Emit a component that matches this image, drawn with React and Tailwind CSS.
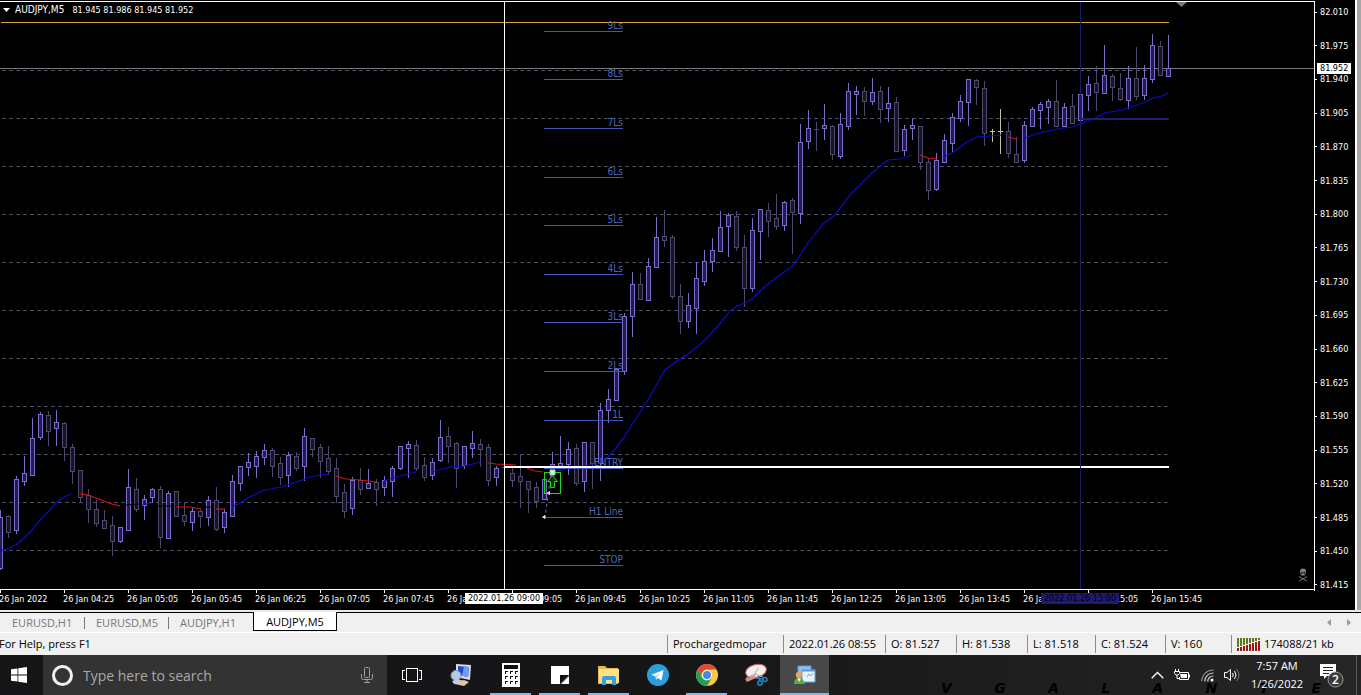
const BAR_STEP = 8;

// [high, body top, body bottom, low, direction] in chart pixels: 1 = up, 0 = down, 2 = highlighted doji
const CANDLES = [
  [510, 517, 568, 570, 1], [515, 516, 532, 538, 0], [476, 479, 530, 534, 1], [456, 473, 481, 486, 1],
  [418, 438, 475, 475, 1], [412, 414, 437, 440, 1], [411, 415, 431, 446, 0], [410, 422, 428, 446, 1],
  [422, 423, 447, 461, 0], [444, 447, 471, 484, 0], [470, 470, 497, 503, 0], [489, 495, 509, 523, 0],
  [500, 509, 523, 527, 0], [510, 520, 528, 528, 0], [516, 525, 541, 556, 0], [527, 527, 541, 543, 1],
  [469, 487, 530, 530, 1], [478, 489, 509, 512, 0], [495, 499, 505, 520, 1], [488, 489, 497, 503, 1],
  [486, 489, 537, 548, 0], [491, 493, 538, 538, 1], [491, 491, 516, 516, 0], [502, 515, 521, 526, 0],
  [508, 511, 522, 531, 1], [509, 511, 516, 528, 0], [496, 500, 517, 526, 1], [487, 500, 529, 531, 0],
  [509, 512, 527, 533, 1], [475, 481, 516, 516, 1], [466, 466, 483, 491, 1], [453, 462, 467, 476, 1],
  [451, 456, 466, 478, 1], [444, 450, 457, 465, 1], [448, 450, 466, 477, 0], [457, 463, 477, 485, 0],
  [452, 455, 475, 487, 1], [452, 456, 468, 471, 0], [428, 436, 466, 481, 1], [438, 438, 449, 457, 0],
  [444, 447, 461, 478, 0], [446, 458, 471, 475, 0], [458, 468, 496, 503, 0], [484, 492, 511, 518, 0],
  [477, 480, 508, 515, 1], [468, 480, 489, 495, 0], [469, 483, 488, 489, 1], [479, 482, 489, 506, 0],
  [476, 480, 487, 496, 1], [466, 468, 481, 497, 1], [446, 446, 468, 470, 1], [441, 444, 448, 478, 1],
  [440, 445, 468, 471, 0], [457, 465, 477, 481, 0], [458, 462, 475, 480, 1], [420, 437, 460, 462, 1],
  [427, 436, 446, 463, 0], [442, 443, 468, 488, 0], [446, 446, 465, 469, 1], [431, 443, 448, 458, 1],
  [439, 444, 449, 467, 0], [444, 447, 480, 486, 0], [466, 468, 477, 486, 1], [467, 467, 468, 468, 0],
  [468, 473, 480, 487, 0], [454, 476, 481, 508, 0], [481, 481, 489, 513, 0], [482, 487, 501, 508, 0],
  [479, 479, 499, 499, 1], [452, 464, 471, 475, 1], [436, 463, 466, 468, 1], [442, 449, 464, 475, 1],
  [444, 448, 483, 486, 0], [442, 442, 481, 492, 1], [442, 442, 463, 489, 0], [403, 410, 463, 481, 1],
  [389, 399, 410, 423, 1], [369, 369, 400, 400, 1], [313, 316, 371, 375, 1], [272, 284, 316, 337, 1],
  [273, 284, 299, 300, 0], [258, 266, 300, 301, 1], [217, 237, 267, 267, 1], [210, 236, 240, 247, 0],
  [235, 237, 296, 299, 0], [284, 296, 321, 334, 0], [293, 305, 321, 328, 1], [262, 278, 308, 334, 1],
  [250, 261, 281, 286, 1], [238, 250, 261, 272, 1], [211, 227, 251, 251, 1], [213, 215, 226, 257, 1],
  [211, 216, 247, 251, 0], [235, 247, 288, 307, 0], [218, 230, 288, 292, 1], [209, 209, 231, 260, 1],
  [203, 210, 221, 237, 0], [194, 218, 226, 230, 0], [201, 202, 225, 231, 1], [198, 200, 212, 254, 0],
  [124, 142, 213, 224, 1], [110, 128, 141, 149, 1], [122, 129, 129, 151, 0], [104, 125, 128, 140, 1],
  [125, 126, 154, 160, 0], [113, 124, 156, 159, 1], [83, 91, 126, 130, 1], [86, 91, 94, 115, 1],
  [87, 91, 101, 116, 0], [78, 92, 101, 105, 1], [86, 91, 109, 123, 0], [87, 103, 108, 122, 1],
  [97, 102, 151, 152, 0], [125, 129, 150, 156, 1], [118, 125, 128, 140, 1], [126, 126, 162, 170, 0],
  [158, 162, 190, 200, 0], [153, 160, 189, 191, 1], [134, 140, 162, 162, 1], [113, 117, 143, 153, 1],
  [95, 101, 118, 122, 1], [79, 79, 102, 126, 1], [79, 80, 87, 105, 0], [81, 88, 133, 146, 0],
  [129, 131, 131, 142, 2], [109, 131, 131, 154, 2], [122, 131, 153, 158, 0], [137, 154, 162, 162, 0],
  [121, 125, 160, 163, 1], [107, 109, 126, 126, 1], [102, 104, 110, 129, 1], [99, 101, 107, 124, 1],
  [80, 101, 126, 126, 0], [103, 107, 126, 127, 1], [94, 106, 123, 124, 0], [94, 94, 120, 120, 1],
  [76, 84, 95, 111, 1], [66, 83, 92, 111, 0], [45, 75, 93, 93, 1], [74, 76, 87, 101, 0],
  [73, 88, 99, 101, 0], [66, 78, 100, 109, 1], [47, 78, 96, 100, 0], [65, 78, 95, 100, 1],
  [34, 45, 79, 83, 1], [41, 46, 75, 75, 0], [35, 68, 76, 76, 1],
];

const CANDLE_COLORS = [
  { stroke: "#4f486e", fill: "#17151f" },
  { stroke: "#7d6cc9", fill: "#231a4e" },
  { stroke: "#c3c39a", fill: "#c3c39a" },
];

const MOVING_AVERAGE = [
  { color: "#0c0ccc", points: "0,551 8,549 16,545 24,538 32,530 40,520 48,512 56,503 64,497 71,494" },
  { color: "#d8101c", points: "80,494 88,495 96,498 104,501 112,504 120,506" },
  { color: "#000000", points: "125,505 139,504" },
  { color: "#0c0ccc", points: "142,505 147,504 152,503" },
  { color: "#000000", points: "158,506 174,506" },
  { color: "#d8101c", points: "176,507 190,507 201,509" },
  { color: "#000000", points: "204,507 214,507" },
  { color: "#d8101c", points: "216,509 225,509" },
  { color: "#0c0ccc", points: "232,507 240,503 248,498 262,491 275,488 282,487 290,484 299,481 310,477 320,475 329,474" },
  { color: "#d8101c", points: "336,476 346,479 360,480 376,482" },
  { color: "#0c0ccc", points: "384,481 396,477 408,474 416,472" },
  { color: "#0c0ccc", points: "432,472 450,467 464,466 482,462" },
  { color: "#d8101c", points: "488,463 496,464 516,465" },
  { color: "#d8101c", points: "527,468 535,471 543,472" },
  {
    color: "#0c0ccc",
    points:
      "554,472 568,468 584,466 600,463 608,457 616,448 624,437 633,423 645,405 665,370 677,361 688,354 703,342 717,327 730,311 737,306 745,303 752,299 763,288 777,277 793,266 802,252 808,243 823,224 835,215 850,195 873,172 888,160 900,159 912,155",
  },
  { color: "#d8101c", points: "920,155 928,158 937,159" },
  { color: "#0c0ccc", points: "943,157 952,153 967,142 977,137 990,136 1001,135" },
  { color: "#d8101c", points: "1008,137 1016,139" },
  {
    color: "#0c0ccc",
    points: "1023,139 1033,135 1043,132 1063,128 1073,127 1083,123 1095,118 1105,113 1122,110 1130,107 1138,105 1153,98 1162,96 1168,93",
  },
];

const GRID_LINES = [70, 118, 166, 214, 262, 310, 358, 406, 454, 502, 550];

const LEVELS = [
  ["9Ls", 31], ["8Ls", 79], ["7Ls", 128], ["6Ls", 177], ["5Ls", 225], ["4Ls", 274],
  ["3Ls", 322], ["2Ls", 371], ["1L", 420], ["ENTRY", 468], ["H1 Line", 517], ["STOP", 565],
];

const PRICES = [
  "82.010", "81.975", "81.940", "81.905", "81.870", "81.835", "81.800", "81.765", "81.730",
  "81.695", "81.660", "81.625", "81.590", "81.555", "81.520", "81.485", "81.450", "81.415",
];

const TIMES = [
  "26 Jan 2022", "26 Jan 04:25", "26 Jan 05:05", "26 Jan 05:45", "26 Jan 06:25", "26 Jan 07:05", "26 Jan 07:45",
  "26 Jan 08:25", "26 Jan 09:05", "26 Jan 09:45", "26 Jan 10:25", "26 Jan 11:05", "26 Jan 11:45", "26 Jan 12:25",
  "26 Jan 13:05", "26 Jan 13:45", "26 Jan 14:25", "26 Jan 15:05", "26 Jan 15:45",
];

const TABS = ["EURUSD,H1", "EURUSD,M5", "AUDJPY,H1"];

const Candle = ({ index, data }) => {
  const [high, top, bottom, low, kind] = data;
  const x = index * BAR_STEP + 0.5;
  const { stroke, fill } = CANDLE_COLORS[kind];
  return (
    <g stroke={stroke} fill={fill}>
      <line x1={x} x2={x} y1={high} y2={low} />
      {bottom - top > 1 ? (
        <rect x={x - 2} y={top + 0.5} width="4" height={bottom - top} />
      ) : (
        <line x1={x - 2.5} x2={x + 2.5} y1={top + 0.5} y2={top + 0.5} />
      )}
    </g>
  );
};

const PriceChart = () => (
  <svg width="1314" height="587" viewBox="0 2 1314 587" className="block shrink-0" role="img" aria-label="AUDJPY M5 chart">
    <g shapeRendering="crispEdges">
      {GRID_LINES.map((y) => (
        <line key={y} x1="2" x2="1169" y1={y + 0.5} y2={y + 0.5} stroke="#505064" strokeDasharray="4 3" />
      ))}
      <line x1="1" x2="1169" y1="22.5" y2="22.5" stroke="#d8a440" />
      <line x1="0" x2="1314" y1="68.5" y2="68.5" stroke="#77777c" />
      {CANDLES.map((data, i) => (
        <Candle key={i} index={i} data={data} />
      ))}
    </g>

    <g fill="none" strokeWidth="1.2">
      {MOVING_AVERAGE.map(({ color, points }) => (
        <polyline key={points} points={points} stroke={color} />
      ))}
    </g>

    <g className="font-['DejaVu_Sans_Condensed',sans-serif] text-[10px]" fill="#4d68bc" textAnchor="end">
      {LEVELS.map(([label, y]) => (
        <g key={label}>
          <line x1="544" x2="623" y1={y + 0.5} y2={y + 0.5} stroke="#4056b8" shapeRendering="crispEdges" />
          <text x="623" y={y - 2}>{label}</text>
        </g>
      ))}
    </g>

    <g shapeRendering="crispEdges">
      <rect x="504" y="466" width="665" height="2" fill="#fff" />
      <line x1="504.5" x2="504.5" y1="1" y2="589" stroke="#fff" />
      <line x1="1080.5" x2="1080.5" y1="2" y2="589" stroke="#1b1b62" />
      <rect x="1081" y="118" width="88" height="2" fill="#1f1f72" />
    </g>

    {/* buy order marker */}
    <line x1="551" y1="474" x2="545" y2="517" stroke="#6f6f9a" strokeDasharray="3 3" />
    <rect x="544.5" y="472.5" width="16" height="21" fill="none" stroke="#22d322" />
    <path d="M552.5 475.5l5 6h-3v6h-4v-6h-3z" fill="#0c2a10" stroke="#22d322" />
    <path d="M550 470h5v5h-5z" fill="#d8ffd8" stroke="#8cc88c" />
    <path d="M547.500 493l2-1.500v3zM542.500 517l2.500-1.500v3z" fill="#fff" stroke="#dcdcdc" />

    <path d="M1176 2h11l-5.500 5z" fill="#77777c" />
    {/* expert advisor skull */}
    <path d="M1300 571q0-2.500 3-2.500t3 2.500v2l-1 1v1.500h-4v-1.500l-1-1z" fill="#7d7d7d" />
    <path d="M1301 572h1.500v1.500h-1.500zM1303.500 572h1.500v1.500h-1.500z" fill="#000" />
    <path d="M1299 576.500l8 4.500M1307 576.500l-8 4.500" stroke="#7d7d7d" />
  </svg>
);

const PriceAxis = () => (
  <aside className="relative flex w-[41px] shrink-0 flex-col justify-between border-l border-white pt-[5px] -mb-px">
    {PRICES.map((price) => (
      <div key={price} className="flex h-3 items-center gap-[3px] leading-3">
        <i className="h-px w-[2px] bg-white" />
        <span>{price}</span>
      </div>
    ))}
    <span className="absolute left-[2px] top-[62px] h-[11px] bg-white px-[3px] leading-[11px] text-black">81.952</span>
  </aside>
);

const TimeAxis = () => (
  <div className="relative h-5 overflow-hidden">
    <div className="flex">
      {TIMES.map((time) => (
        <div key={time} className="w-16 shrink-0">
          <i className="block h-[3px] w-px bg-white" />
          <span className="-ml-px block whitespace-nowrap leading-3">{time}</span>
        </div>
      ))}
    </div>
    <span className="absolute left-[465px] top-[3px] h-[11px] w-[78px] bg-white text-center leading-[11px] text-black">2022.01.26 09:00</span>
    <span className="absolute left-[1041px] top-[3px] h-[11px] w-[78px] bg-[#1f1a75] text-center leading-[11px] text-black">2022.01.26 15:00</span>
  </div>
);

const ChartWindow = () => (
  <section className="flex bg-black text-[9px] text-white font-['DejaVu_Sans_Condensed',sans-serif]">
    <div className="min-w-0 flex-1">
      <div className="mt-px flex">
        <div className="relative min-w-0 flex-1 overflow-hidden border-y border-white">
          <PriceChart />
          <div className="absolute left-[3px] top-[2px] flex items-center gap-1 leading-3">
            <svg width="8" height="4"><path d="M0 0h7l-3.500 4z" fill="#fff" /></svg>
            <h1 className="text-[10px]">AUDJPY,M5</h1>
            <span className="pl-1">81.945 81.986 81.945 81.952</span>
          </div>
        </div>
        <PriceAxis />
      </div>
      <TimeAxis />
    </div>
    <div className="w-[2px] bg-white" />
    <div className="w-1 bg-[#a8a8a8]" />
  </section>
);

const ChartTabs = () => (
  <nav className="flex h-5 border-t border-black bg-[#f0f0f0] text-[11px] leading-[17px] text-[#777]">
    <div className="flex pl-px">
      {TABS.map((tab, i) => (
        <button key={tab} type="button" className="flex w-[84px] items-center justify-between pl-[11px]">
          <span>{tab}</span>
          {i < 2 && <i className="h-3 w-px bg-[#777]" />}
        </button>
      ))}
    </div>
    <button type="button" className="-mt-px mb-px w-[84px] border border-t-0 border-black bg-white text-black">AUDJPY,M5</button>
    <div className="ml-auto flex items-center gap-4 pr-[10px] text-[#9a9a9a]">
      <button type="button" aria-label="Scroll left">
        <svg width="4" height="7" className="block"><path d="M4 0v7L0 3.500z" fill="currentColor" /></svg>
      </button>
      <button type="button" aria-label="Scroll right">
        <svg width="4" height="7" className="block"><path d="M0 0v7L4 3.500z" fill="currentColor" /></svg>
      </button>
    </div>
  </nav>
);

const StatusField = ({ className, children }) => (
  <div className={`my-[2px] flex shrink-0 items-center whitespace-nowrap border-l border-[#8a8a8a] pl-[5px] ${className}`}>{children}</div>
);

const TrafficBars = () => (
  <svg width="24" height="13" className="mr-[3px]" shapeRendering="crispEdges">
    {[0, 1, 2, 3, 4, 5, 6, 7].map((i) => (
      <g key={i}>
        <rect x={i * 3} y="0" width="2" height={9 - i} fill="#5d7a1c" />
        <rect x={i * 3} y={10 - i} width="2" height={3 + i} fill="#9c1c14" />
      </g>
    ))}
  </svg>
);

const StatusBar = () => (
  <footer className="flex h-[23px] border-t border-white bg-[#f0f0f0] text-[11px] leading-5 text-black">
    <div className="-ml-px flex flex-1 items-center">For Help, press F1</div>
    <StatusField className="w-[116px]">Prochargedmopar</StatusField>
    <StatusField className="w-[102px]">2022.01.26 08:55</StatusField>
    <StatusField className="w-[71px]">O: 81.527</StatusField>
    <StatusField className="w-[71px]">H: 81.538</StatusField>
    <StatusField className="w-[68px]">L: 81.518</StatusField>
    <StatusField className="w-[70px]">C: 81.524</StatusField>
    <StatusField className="w-[66px]">V: 160</StatusField>
    <StatusField className="w-[130px]">
      <TrafficBars />
      174088/21 kb
    </StatusField>
  </footer>
);

const WindowsLogo = () => (
  <svg width="16" height="16" fill="#fff">
    <path d="M0 2.300l6.500-.9v6.200H0zM7.300 1.300L16 0v7.600H7.300zM0 8.400h6.500v6.200L0 13.700zM7.300 8.400H16V16l-8.700-1.300z" />
  </svg>
);

const MicIcon = () => (
  <svg width="12" height="16" fill="none" stroke="#a0a0a0">
    <rect x="3.500" y=".5" width="5" height="10" rx="1" />
    <path d="M.5 7v3.500q0 2 2 2h7q2 0 2-2V7M6 12.500v3M3 15.500h6" />
  </svg>
);

const TaskViewIcon = () => (
  <svg width="20" height="14" fill="none" stroke="#fff" shapeRendering="crispEdges">
    <path d="M4.500.5h11v13h-11zM3 2.500H.5v9H3M17 2.500h2.500v9H17" />
  </svg>
);

const RemotePcIcon = () => (
  <svg width="24" height="24">
    <path d="M6 1l15 1-1 15-14-3z" fill="#d8dce6" />
    <path d="M8 3l11 1-1 10-10-2z" fill="#2848c8" />
    <path d="M14 3.600l5 .4-1 10-6-1.200z" fill="#6f9cf0" />
    <circle cx="6" cy="12.500" r="5" fill="#b4cae6" stroke="#7d99bc" />
    <path d="M2 18l6-2 5 2-3 4-6-1z" fill="#c9ccd8" />
    <path d="M9 18l5-1 5 2-5 4-5-1z" fill="#e2c2a0" />
  </svg>
);

const CalculatorIcon = () => (
  <svg width="18" height="24" shapeRendering="crispEdges">
    <path d="M0 0h18v24H0z" fill="#fff" />
    <path d="M2 2h14v4H2z" fill="#111" />
    {[8, 13, 18].map((y) => [3, 8, 13].map((x) => <path key={`${x}-${y}`} d={`M${x} ${y}h3v1h-2v2h-1z`} fill="#111" />))}
  </svg>
);

const NotesIcon = () => (
  <svg width="18" height="18">
    <path d="M0 0h18v9l-9 9H0z" fill="#fff" />
    <path d="M9 18V9h9z" fill="#111" />
    <path d="M18 10v8h-8z" fill="#fff" />
  </svg>
);

const FolderIcon = () => (
  <svg width="22" height="20">
    <path d="M0 1h7l2 2h11v16H0z" fill="#e8b84a" />
    <path d="M1 4h20v14H1z" fill="#fbe08c" />
    <path d="M4 20v-7q0-2 2-2h10q2 0 2 2v7h-4v-5H8v5z" fill="#3aa0dc" />
  </svg>
);

const TelegramIcon = () => (
  <svg width="22" height="22">
    <circle cx="11" cy="11" r="11" fill="#2aa0da" />
    <path d="M4.500 10.800l12-4.800-2 10.500-3.600-2.600-1.900 1.900-.4-3.200z" fill="#fff" />
    <path d="M8.600 12.600l5.400-4.300-4.300 5.200-.7 2.300z" fill="#a8cfe6" />
  </svg>
);

const ChromeIcon = () => (
  <svg width="22" height="22" viewBox="0 0 22 22">
    <circle cx="11" cy="11" r="11" fill="#fdc93a" />
    <path d="M1.500 5.500A11 11 0 0 1 20.500 5.500H11a5.500 5.500 0 0 0-4.800 8.200z" fill="#dd4b3e" />
    <path d="M1.500 5.500A11 11 0 0 0 11 22l4.800-8.300a5.500 5.500 0 0 1-9.600 0z" fill="#1ea05a" />
    <circle cx="11" cy="11" r="5" fill="#fff" />
    <circle cx="11" cy="11" r="4" fill="#4a86e8" />
  </svg>
);

const SnippingIcon = () => (
  <svg width="24" height="24">
    <ellipse cx="12" cy="8" rx="10.500" ry="6.500" fill="#f4eeee" stroke="#d05a5a" transform="rotate(-14 12 8)" />
    <path d="M2 15l9-4 3-6M11 11l8 3" stroke="#b8a0a0" fill="none" />
    <path d="M1 16l10-4 1 3-9 4z" fill="#d88c88" />
    <g stroke="#2584c4" strokeWidth="1.600" fill="none">
      <circle cx="16" cy="20" r="2.200" />
      <circle cx="21" cy="16.500" r="2" />
      <path d="M16 18l-2-5M19 16l-7-1" />
    </g>
  </svg>
);

const MetaTraderIcon = () => (
  <svg width="22" height="20">
    <path d="M4 1h13v10H4z" fill="#8fc0ea" stroke="#5d9cd4" />
    <path d="M8 5h13v12H8z" fill="#e6f1fb" stroke="#6aa6dc" />
    <path d="M8 4.500h13v2H8z" fill="#5d9cd4" />
    <path d="M13 12l2-3 2 2 2-3" stroke="#88a8c8" fill="none" />
    <circle cx="5" cy="10" r="3.200" fill="#e4a45c" />
    <path d="M0 19q0-6 5-6t5.500 6z" fill="#5cae3c" />
    <path d="M3.500 13.200L5 17l2-3.500z" fill="#eef8e8" />
  </svg>
);

const TASKS = [
  { name: "Remote PC", Icon: RemotePcIcon },
  { name: "Calculator", Icon: CalculatorIcon, open: true },
  { name: "Sticky Notes", Icon: NotesIcon, open: true },
  { name: "File Explorer", Icon: FolderIcon, open: true },
  { name: "Telegram", Icon: TelegramIcon },
  { name: "Chrome", Icon: ChromeIcon, open: true },
  { name: "Snipping Tool", Icon: SnippingIcon },
  { name: "MetaTrader", Icon: MetaTraderIcon, active: true },
];

const TaskButton = ({ task }) => {
  const { name, Icon, open, active } = task;
  return (
    <button
      type="button"
      aria-label={name}
      className={`relative flex h-10 w-[49px] items-center justify-center ${active ? "bg-[#48484a]" : ""}`}
    >
      <Icon />
      {open && <i className="absolute inset-x-1 bottom-0 h-[2px] bg-[#85b7e0]" />}
      {active && <i className="absolute inset-x-0 bottom-0 h-[2px] bg-[#85b7e0]" />}
    </button>
  );
};

const ChevronIcon = () => (
  <svg width="13" height="8" fill="none" stroke="#fff" strokeWidth="1.300">
    <path d="M.7 7.300l5.800-5.800 5.800 5.800" />
  </svg>
);

const BatteryIcon = () => (
  <svg width="17" height="12" fill="none" stroke="#fff">
    <path d="M5.500 3.500h9v7h-9V8M15.500 5.500v3" />
    <path d="M6 5h7v4H7z" fill="#fff" stroke="none" />
    <path d="M1.500 0v3M4.500 0v3M.5 2.500h5v2l-1.500 1.500h-2L.5 4.500zM3 6v3.500h2" />
  </svg>
);

const WifiIcon = () => (
  <svg width="13" height="13" fill="none" stroke="#d0d0d0" strokeWidth="1.200">
    <path d="M.7 12A11.500 11.500 0 0 1 12.500 1" stroke="#8e8e8e" />
    <path d="M3.700 12.500A8.500 8.500 0 0 1 12.500 4M6.700 12.500A5.500 5.500 0 0 1 12.500 7" />
    <circle cx="11" cy="11" r="1.500" fill="#fff" stroke="none" />
  </svg>
);

const SpeakerIcon = () => (
  <svg width="16" height="14" fill="none" stroke="#fff">
    <path d="M.5 4.500h2.500l3.500-3v11L3 9.500H.5zM8.500 5q1.500 2 0 4M10.500 3q3 4 0 8" />
    <path d="M12.500 1q5 6 0 12" stroke="#777" />
  </svg>
);

const NotificationIcon = () => (
  <svg width="24" height="26">
    <path d="M0 2h16v12H7l-3 3v-3H0z" fill="#fff" />
    <path d="M3 5.500h10M3 8.500h10M3 11.500h6" stroke="#222" />
    <circle cx="15.500" cy="17.500" r="7.500" fill="#3a3a3a" stroke="#9a9a9a" />
    <text x="15.500" y="22" textAnchor="middle" fill="#fff" className="text-[12px] font-semibold">2</text>
  </svg>
);

const Taskbar = () => (
  <div className="relative flex h-10 overflow-hidden bg-gradient-to-r from-[#151518] via-[#161617] to-[#262627] text-white">
    {/* wallpaper lettering that shows through the bar */}
    <div
      aria-hidden="true"
      className="absolute bottom-0 right-10 flex w-[380px] justify-between text-[14px] font-bold italic leading-[14px] text-black font-['DejaVu_Sans',sans-serif]"
    >
      {["V", "G", "A", "L", "A", "N", "T", "E"].map((letter, i) => (
        <span key={i}>{letter}</span>
      ))}
    </div>
    <button type="button" aria-label="Start" className="flex w-[43px] items-center justify-center pr-[6px]">
      <WindowsLogo />
    </button>
    <label className="flex w-[344px] items-center bg-[#333334] pl-[9px] pr-[14px]">
      <i className="h-[21px] w-[21px] rounded-full border-[3px] border-[#f2f2f2]" />
      <input
        type="text"
        aria-label="Search"
        placeholder="Type here to search"
        className="ml-[10px] min-w-0 flex-1 bg-transparent text-[14px] outline-none placeholder:text-[#a9a9a9]"
      />
      <MicIcon />
    </label>
    <button type="button" aria-label="Task View" className="flex w-[49px] items-center justify-center">
      <TaskViewIcon />
    </button>
    <div className="flex pl-px">
      {TASKS.map((task) => (
        <TaskButton key={task.name} task={task} />
      ))}
    </div>
    <div className="relative ml-auto flex items-center">
      <ChevronIcon />
      <div className="ml-[10px] flex items-center gap-[10px]">
        <BatteryIcon />
        <WifiIcon />
        <SpeakerIcon />
      </div>
      <div className="ml-[10px] w-[54px] text-center text-[11px] leading-[18px]">
        <div>7:57 AM</div>
        <div>1/26/2022</div>
      </div>
      <button type="button" aria-label="Notifications" className="ml-4 mr-3">
        <NotificationIcon />
      </button>
      <i className="mr-1 h-10 w-px bg-[#5a5a5a]" />
    </div>
  </div>
);

const App = () => (
  <main className="w-full overflow-hidden bg-black font-['Open_Sans',sans-serif]">
    <ChartWindow />
    <div className="h-[2px] bg-[#e8e8e8]" />
    <ChartTabs />
    <StatusBar />
    <Taskbar />
  </main>
);

export default App;
